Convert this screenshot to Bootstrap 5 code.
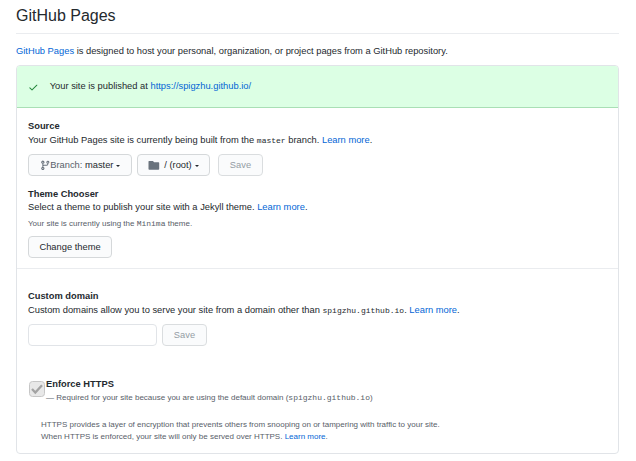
<!DOCTYPE html>
<html lang="en">
<head>
<meta charset="utf-8">
<title>GitHub Pages</title>
<link href="https://cdn.jsdelivr.net/npm/bootstrap@5.3.0/dist/css/bootstrap.min.css" rel="stylesheet">
<style>
body{font-family:"Liberation Sans",Arial,sans-serif;font-size:9.34px;line-height:14px;color:#24292e;background:#fff}
main{padding:4px 17px 0 16px}
a{color:#0366d6;text-decoration:none}
code{font-family:"Liberation Mono",monospace;font-size:8px;line-height:1;color:inherit}
h1{font-size:16px;line-height:24px;font-weight:400;height:30px;border-bottom:1px solid #eaecef}
h2{font-size:9.34px;line-height:14px;font-weight:700;margin:0}
.intro{padding:10px 0 7px}
.pages-box{height:389px;border:1px solid #e1e4e8;border-radius:4px}
.notice{height:42px;background:#dcffe4;border-bottom:1px solid #a9dfb5;padding:0 11px}
.notice-text{padding:0 0 2px 11px}
.notice svg{margin-top:2px}
.source-area{height:161px;padding:11px 11px 0;border-bottom:1px solid #eaecef}
.domain-area{padding:20px 11px 0}
.control-row{padding-top:7px}
.gh-btn{--bs-btn-padding-x:10px;--bs-btn-padding-y:0;--bs-btn-font-size:9.34px;--bs-btn-line-height:20px;--bs-btn-border-radius:4px;--bs-btn-color:#24292e;--bs-btn-bg:#fafbfc;--bs-btn-border-color:#d5d8da;--bs-btn-disabled-color:#959da5;--bs-btn-disabled-bg:#fafbfc;--bs-btn-disabled-border-color:#dadddf;--bs-btn-disabled-opacity:1;height:22px;display:inline-flex;align-items:center;justify-content:center}
.gh-btn svg{fill:#6a737d;flex:none}
.btn-prefix{color:#586069}
.caret{border:2.6px solid transparent;border-top-color:currentColor;border-bottom:0;margin-left:3px;margin-top:1px}
.w-branch{width:104px}.w-folder{width:73px;margin-left:5px}.w-save{width:45px}.w-theme{width:84px}
.folder-label{margin-left:4px}
.gap-wide{margin-left:8px}.gap-narrow{margin-left:5px}
.theme-title{margin-top:11px}
.theme-text{margin:-1px 0 0}
.hint{font-size:8px;line-height:12px;color:#586069}
.theme-note{margin:4px 0 6px}
.domain-input{width:129px;height:22px;min-height:0;padding:0 8px;font-size:9.34px;border-color:#e1e4e8;border-radius:4px}
.enforce{margin-top:31px}
.tick{width:16px;height:16px;margin:4px 1px 0;flex:none}
.enforce .hint{padding-top:1px}
.https-note{margin:15px 0 0 13px}
</style>
<script src="https://cdn.jsdelivr.net/npm/bootstrap@5.3.0/dist/js/bootstrap.bundle.min.js"></script>
</head>
<body>
<main>
  <h1 class="mb-0">GitHub Pages</h1>
  <p class="intro mb-0"><a href="#">GitHub Pages</a> is designed to host your personal, organization, or project pages from a GitHub repository.</p>
  <section class="pages-box overflow-hidden">
    <div class="notice d-flex align-items-center">
      <svg width="10.7" height="10.7" viewBox="0 0 16 16" fill="#22863a"><path d="M13.78 4.22a.75.75 0 0 1 0 1.06l-7.25 7.25a.75.75 0 0 1-1.06 0L2.22 9.28a.75.75 0 0 1 1.06-1.06L6 10.94l6.72-6.72a.75.75 0 0 1 1.06 0z"/></svg>
      <span class="notice-text">Your site is published at <a href="#">https://spigzhu.github.io/</a></span>
    </div>
    <div class="source-area">
      <h2>Source</h2>
      <p class="mb-0">Your GitHub Pages site is currently being built from the <code>master</code> branch. <a href="#">Learn more</a>.</p>
      <div class="control-row d-flex">
        <button class="btn gh-btn w-branch"><svg width="10.7" height="10.7" viewBox="0 0 16 16"><path fill-rule="evenodd" d="M11.75 2.5a.75.75 0 1 0 0 1.5.75.75 0 0 0 0-1.5zm-2.25.75a2.25 2.25 0 1 1 3 2.122V6A2.5 2.5 0 0 1 10 8.5H6a1 1 0 0 0-1 1v1.128a2.251 2.251 0 1 1-1.5 0V5.372a2.25 2.25 0 1 1 1.5 0v1.836A2.492 2.492 0 0 1 6 7h4a1 1 0 0 0 1-1v-.628A2.25 2.25 0 0 1 9.5 3.25zM4.25 12a.75.75 0 1 0 0 1.5.75.75 0 0 0 0-1.5zM3.5 3.25a.75.75 0 1 1 1.5 0 .75.75 0 0 1-1.5 0z"/></svg><span><span class="btn-prefix">Branch:</span> master</span><span class="caret"></span></button>
        <button class="btn gh-btn w-folder"><svg width="12" height="11" viewBox="0 0 12 11"><path d="M1 1h4l1 1.3h4.5q.7 0 .7.7v6q0 .8-.8.8H1.300q-.8 0-.8-.8V1.600Q.5 1 1 1z"/></svg><span class="folder-label">/ (root)</span><span class="caret"></span></button>
        <button class="btn gh-btn w-save gap-wide" disabled>Save</button>
      </div>
      <h2 class="theme-title">Theme Chooser</h2>
      <p class="theme-text">Select a theme to publish your site with a Jekyll theme. <a href="#">Learn more</a>.</p>
      <p class="hint theme-note">Your site is currently using the <code>Minima</code> theme.</p>
      <button class="btn gh-btn w-theme">Change theme</button>
    </div>
    <div class="domain-area">
      <h2>Custom domain</h2>
      <p class="mb-0">Custom domains allow you to serve your site from a domain other than <code>spigzhu.github.io</code>. <a href="#">Learn more</a>.</p>
      <div class="control-row d-flex">
        <input class="form-control domain-input" type="text" aria-label="Custom domain">
        <button class="btn gh-btn w-save gap-narrow" disabled>Save</button>
      </div>
      <div class="enforce d-flex">
        <svg class="tick" viewBox="0 0 16 16"><rect x=".5" y=".5" width="15" height="15" rx="3" fill="#e8e8e8" stroke="#c6c6c6"/><path d="M3 8l3.3 3.5L13 4.2" fill="none" stroke="#a3a3a3" stroke-width="2.3"/></svg>
        <div><h2>Enforce HTTPS</h2><p class="hint mb-0">— Required for your site because you are using the default domain (<code>spigzhu.github.io</code>)</p></div>
      </div>
      <p class="hint https-note">HTTPS provides a layer of encryption that prevents others from snooping on or tampering with traffic to your site.<br>When HTTPS is enforced, your site will only be served over HTTPS. <a href="#">Learn more</a>.</p>
    </div>
  </section>
</main>
</body>
</html>
